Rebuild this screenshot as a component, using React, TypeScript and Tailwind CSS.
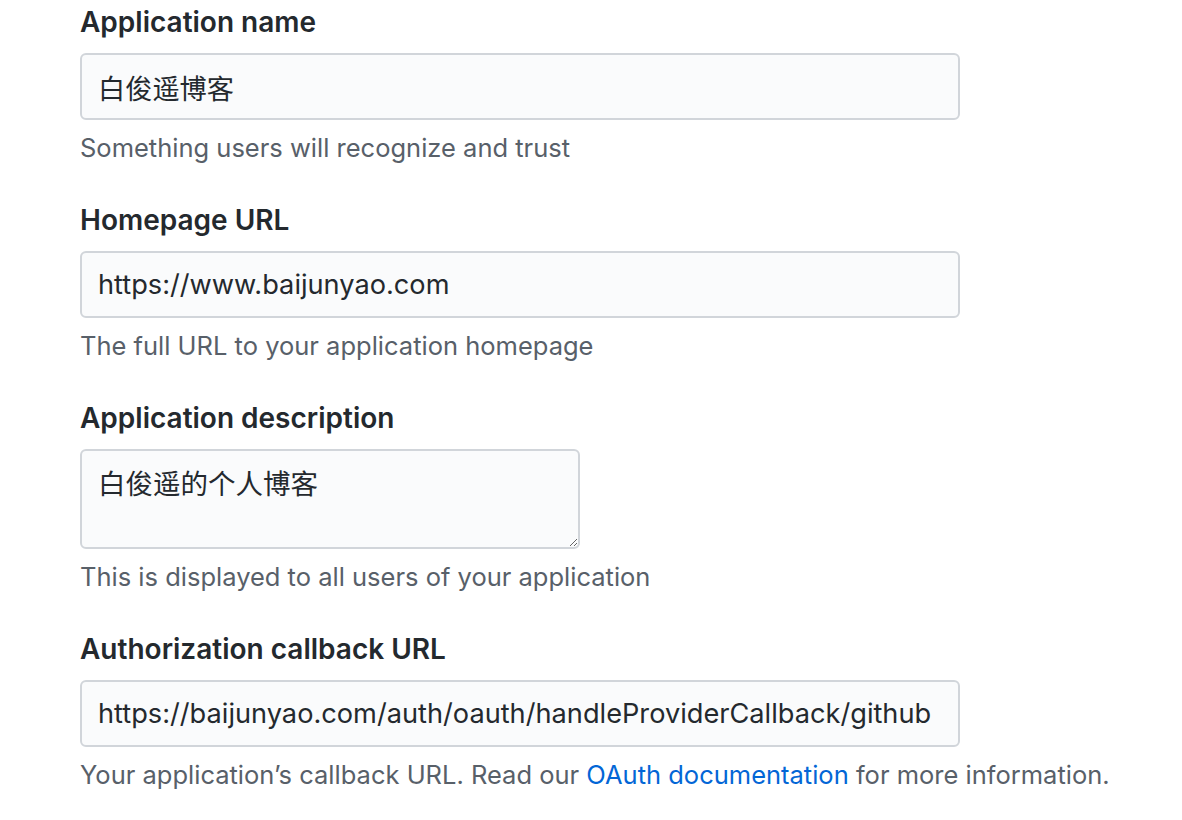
import React from 'react';

const font = { fontFamily: 'Inter, "Noto Sans CJK SC", sans-serif' };

function Field({ label, note, children }: { label: string; note: React.ReactNode; children: React.ReactNode }) {
  return (
    <div className="flex flex-col">
      <label className="text-[28px] leading-[30px] font-semibold text-[#24292e]">{label}</label>
      <div className="mt-[16px]">{children}</div>
      <p className="mt-[12px] text-[25.5px] leading-[32px] text-[#586069]">{note}</p>
    </div>
  );
}

const inputCls =
  'block h-[67px] w-[880px] rounded-[6px] border-2 border-[#d1d5da] bg-[#fafbfc] px-[16px] text-[27.2px] text-[#24292e] outline-none';

export default function App() {
  return (
    <div className="min-h-screen bg-white pl-[80px] pt-[7px]" style={font}>
      <div className="flex flex-col gap-[41px]">
        <Field label="Application name" note="Something users will recognize and trust">
          <input className={inputCls} style={font} defaultValue="白俊遥博客" />
        </Field>
        <Field label="Homepage URL" note="The full URL to your application homepage">
          <input className={inputCls} style={font} defaultValue="https://www.baijunyao.com" />
        </Field>
        <Field label="Application description" note="This is displayed to all users of your application">
          <textarea
            className="block h-[100px] w-[500px] rounded-[6px] border-2 border-[#d1d5da] bg-[#fafbfc] px-[16px] pt-[16px] text-[27.5px] leading-[34px] text-[#24292e] outline-none"
            style={font}
            defaultValue="白俊遥的个人博客"
          />
        </Field>
        <Field
          label="Authorization callback URL"
          note={
            <>
              Your application’s callback URL. Read our{' '}
              <a href="#" className="text-[#0366d6]">
                OAuth documentation
              </a>{' '}
              for more information.
            </>
          }
        >
          <input
            className={inputCls}
            style={font}
            defaultValue="https://baijunyao.com/auth/oauth/handleProviderCallback/github"
          />
        </Field>
      </div>
    </div>
  );
}
